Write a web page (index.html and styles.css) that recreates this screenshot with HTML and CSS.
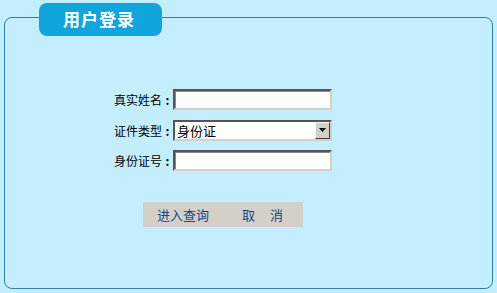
FILE: index.html
```html
<!DOCTYPE html>
<html>
<head>
<meta charset="utf-8">
<link rel="stylesheet" href="styles.css">
</head>
<body>
<div class="page">
  <div class="panel">
    <div class="tab">用户登录</div>
    <form class="form">
      <div class="row">
        <label class="label">真实姓名<span class="colon">:</span></label>
        <input class="field" type="text">
      </div>
      <div class="row">
        <label class="label">证件类型<span class="colon">:</span></label>
        <div class="select">
          <span class="select-text">身份证</span>
          <span class="select-btn"><svg width="7" height="4" viewBox="0 0 7 4"><path d="M0 0h7L3.5 4z" fill="#000"/></svg></span>
        </div>
      </div>
      <div class="row">
        <label class="label">身份证号<span class="colon">:</span></label>
        <input class="field" type="text">
      </div>
      <div class="buttons">
        <span class="btn-query">进入查询</span>
        <span class="btn-cancel">取<span class="gap"></span>消</span>
      </div>
    </form>
  </div>
</div>
</body>
</html>
```

FILE: styles.css
```css
html, body {
  margin: 0;
  padding: 0;
  background: #c4eefd;
  font-family: "Noto Sans CJK SC", "DejaVu Sans", sans-serif;
  font-size: 12px;
  color: #000;
}
.page {
  width: 497px;
  height: 293px;
  padding: 17px 4px 4px 4px;
  box-sizing: border-box;
}
.panel {
  position: relative;
  height: 272px;
  border: 1px solid #2a7fae;
  border-radius: 8px;
  box-sizing: border-box;
}
.tab {
  position: absolute;
  left: 34px;
  top: -15px;
  width: 123px;
  height: 33px;
  background: #12a4dc;
  border-radius: 8px;
  color: #fff;
  font-weight: bold;
  font-size: 17px;
  line-height: 32px;
  box-sizing: border-box;
  padding-left: 24px;
  letter-spacing: 1px;
}
.form {
  margin: 0;
  padding-top: 71px;
  display: flex;
  flex-direction: column;
  align-items: flex-start;
}
.row {
  display: flex;
  align-items: center;
  height: 21px;
  margin-bottom: 10px;
  padding-left: 106px;
}
.row:nth-child(2) { height: 20px; }
.label {
  width: 62px;
  display: flex;
  justify-content: flex-end;
  align-items: center;
  line-height: 21px;
}
.colon {
  width: 11px;
  text-align: center;
  font-weight: bold;
}
.field {
  width: 159px;
  height: 21px;
  margin: 0;
  padding: 0 2px;
  box-sizing: border-box;
  background: #fff;
  border-style: solid;
  border-width: 2px;
  border-color: #555 #d4d0c8 #d4d0c8 #555;
  box-shadow: inset 1px 1px 0 #888;
  outline: none;
}
.select {
  width: 159px;
  height: 21px;
  box-sizing: border-box;
  background: #fff;
  border-style: solid;
  border-width: 2px;
  border-color: #555 #d4d0c8 #d4d0c8 #555;
  display: flex;
  align-items: center;
  justify-content: space-between;
}
.select-text {
  padding-left: 2px;
  font-size: 13px;
  line-height: 17px;
}
.select-btn {
  width: 15px;
  height: 17px;
  box-sizing: border-box;
  background: #d4d0c8;
  border-style: solid;
  border-width: 1px;
  border-color: #f4f4f4 #404040 #404040 #f4f4f4;
  display: flex;
  align-items: center;
  justify-content: center;
}
.buttons {
  margin-left: 138px;
  margin-top: 21px;
  width: 160px;
  height: 25px;
  background: #d4d0c8;
  display: flex;
  align-items: center;
  color: #0b4a96;
  font-size: 13px;
}
.btn-query {
  padding-left: 14px;
  width: 85px;
}
.btn-cancel {
  display: flex;
}
.gap {
  width: 15px;
}
```
